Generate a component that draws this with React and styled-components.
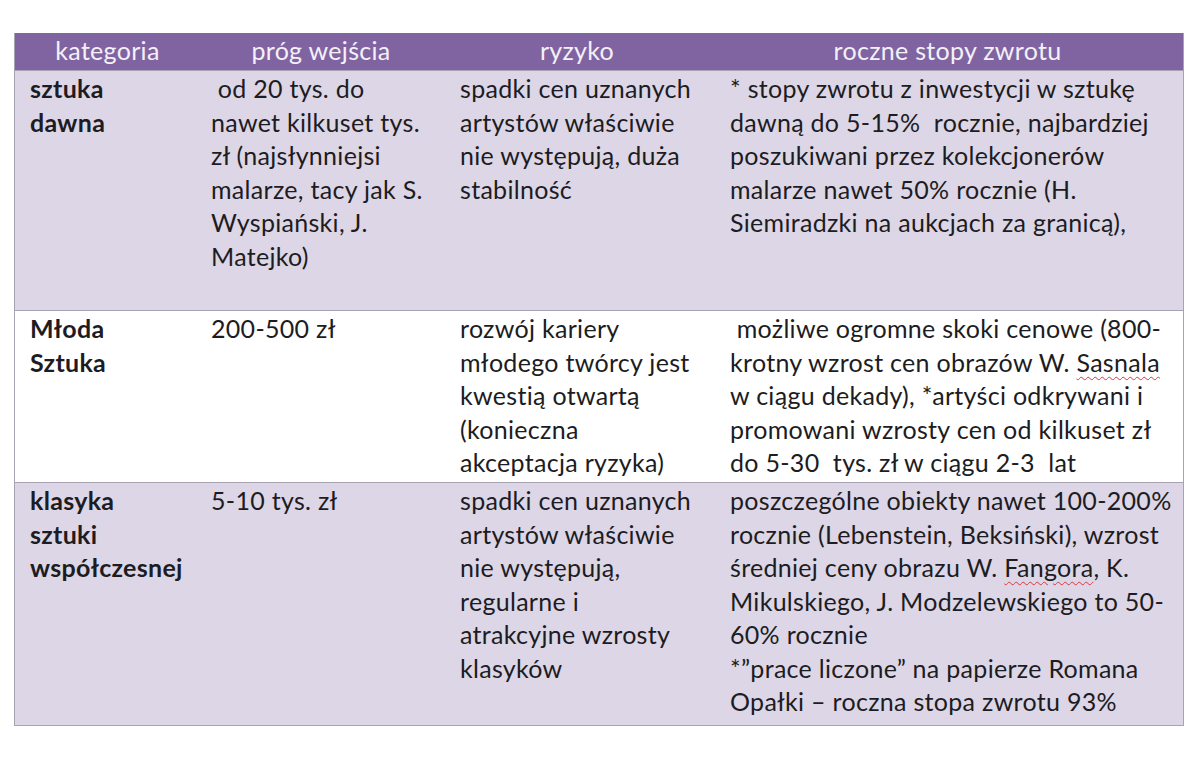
import React from 'react'
import styled, { createGlobalStyle } from 'styled-components'

const GlobalStyle = createGlobalStyle`
  html, body {
    margin: 0;
    padding: 0;
    background: #ffffff;
  }
  body {
    font-family: Lato, 'Liberation Sans', sans-serif;
    color: #1c1c22;
  }
`

const StyledPage = styled.div`
  width: 1200px;
  height: 775px;
  box-sizing: border-box;
  padding: 33px 0 0 14px;
`

const StyledTable = styled.div`
  width: 1170px;
  box-sizing: border-box;
  border: 1px solid #a8a2b2;
  border-top: none;
  display: flex;
  flex-direction: column;
`

const StyledRow = styled.div`
  display: grid;
  grid-template-columns: 185px 242px 270px 1fr;
  min-height: ${props => props.$height}px;
  background-color: ${props => (props.$shaded ? '#dcd6e6' : '#ffffff')};
  border-top: 1px solid #a8a2b2;
  box-sizing: border-box;
`

const StyledHeadRow = styled.div`
  display: grid;
  grid-template-columns: 185px 242px 270px 1fr;
  height: 37px;
  background-color: #8064a2;
  align-items: center;
`

const StyledHeadCell = styled.div`
  text-align: center;
  color: #f4f0f8;
  font-size: 25px;
  letter-spacing: 0.3px;
  line-height: 1;
  padding-bottom: 2px;
`

const StyledCell = styled.div`
  padding: 1px 0 0 ${props => props.$pad}px;
  font-size: 25px;
  letter-spacing: 0.3px;
  line-height: 33.5px;
  font-weight: ${props => (props.$bold ? 700 : 400)};
`

const StyledLine = styled.div`
  white-space: pre;
`

const StyledSpell = styled.span`
  text-decoration: underline wavy #d9363e;
  text-decoration-thickness: 1px;
  text-underline-offset: 4px;
`

const pads = [15, 11, 18, 18]

const headers = ['kategoria', 'próg wejścia', 'ryzyko', 'roczne stopy zwrotu']

const rows = [
  {
    shaded: true,
    height: 240,
    cells: [
      ['sztuka', 'dawna'],
      [
        ' od 20 tys. do',
        'nawet kilkuset tys.',
        'zł (najsłynniejsi',
        'malarze, tacy jak S.',
        'Wyspiański, J.',
        'Matejko)'
      ],
      ['spadki cen uznanych', 'artystów właściwie', 'nie występują, duża', 'stabilność'],
      [
        '* stopy zwrotu z inwestycji w sztukę',
        'dawną do 5-15%  rocznie, najbardziej',
        'poszukiwani przez kolekcjonerów',
        'malarze nawet 50% rocznie (H.',
        'Siemiradzki na aukcjach za granicą),'
      ]
    ]
  },
  {
    shaded: false,
    height: 172,
    cells: [
      ['Młoda', 'Sztuka'],
      ['200-500 zł'],
      ['rozwój kariery', 'młodego twórcy jest', 'kwestią otwartą', '(konieczna', 'akceptacja ryzyka)'],
      [
        ' możliwe ogromne skoki cenowe (800-',
        ['krotny wzrost cen obrazów W. ', { spell: 'Sasnala' }],
        'w ciągu dekady), *artyści odkrywani i',
        'promowani wzrosty cen od kilkuset zł',
        'do 5-30  tys. zł w ciągu 2-3  lat'
      ]
    ]
  },
  {
    shaded: true,
    height: 243,
    cells: [
      ['klasyka', 'sztuki', 'współczesnej'],
      ['5-10 tys. zł'],
      [
        'spadki cen uznanych',
        'artystów właściwie',
        'nie występują,',
        'regularne i',
        'atrakcyjne wzrosty',
        'klasyków'
      ],
      [
        'poszczególne obiekty nawet 100-200%',
        'rocznie (Lebenstein, Beksiński), wzrost',
        ['średniej ceny obrazu W. ', { spell: 'Fangora' }, ', K.'],
        'Mikulskiego, J. Modzelewskiego to 50-',
        '60% rocznie',
        '*”prace liczone” na papierze Romana',
        'Opałki – roczna stopa zwrotu 93%'
      ]
    ]
  }
]

const renderLine = (line, i) => {
  if (typeof line === 'string') {
    return <StyledLine key={i}>{line}</StyledLine>
  }
  return (
    <StyledLine key={i}>
      {line.map((part, j) =>
        typeof part === 'string' ? part : <StyledSpell key={j}>{part.spell}</StyledSpell>
      )}
    </StyledLine>
  )
}

const App = () => (
  <StyledPage>
    <GlobalStyle />
    <StyledTable>
      <StyledHeadRow>
        {headers.map(title => (
          <StyledHeadCell key={title}>{title}</StyledHeadCell>
        ))}
      </StyledHeadRow>
      {rows.map((row, r) => (
        <StyledRow key={r} $shaded={row.shaded} $height={row.height}>
          {row.cells.map((lines, c) => (
            <StyledCell key={c} $pad={pads[c]} $bold={c === 0}>
              {lines.map(renderLine)}
            </StyledCell>
          ))}
        </StyledRow>
      ))}
    </StyledTable>
  </StyledPage>
)

export default App
